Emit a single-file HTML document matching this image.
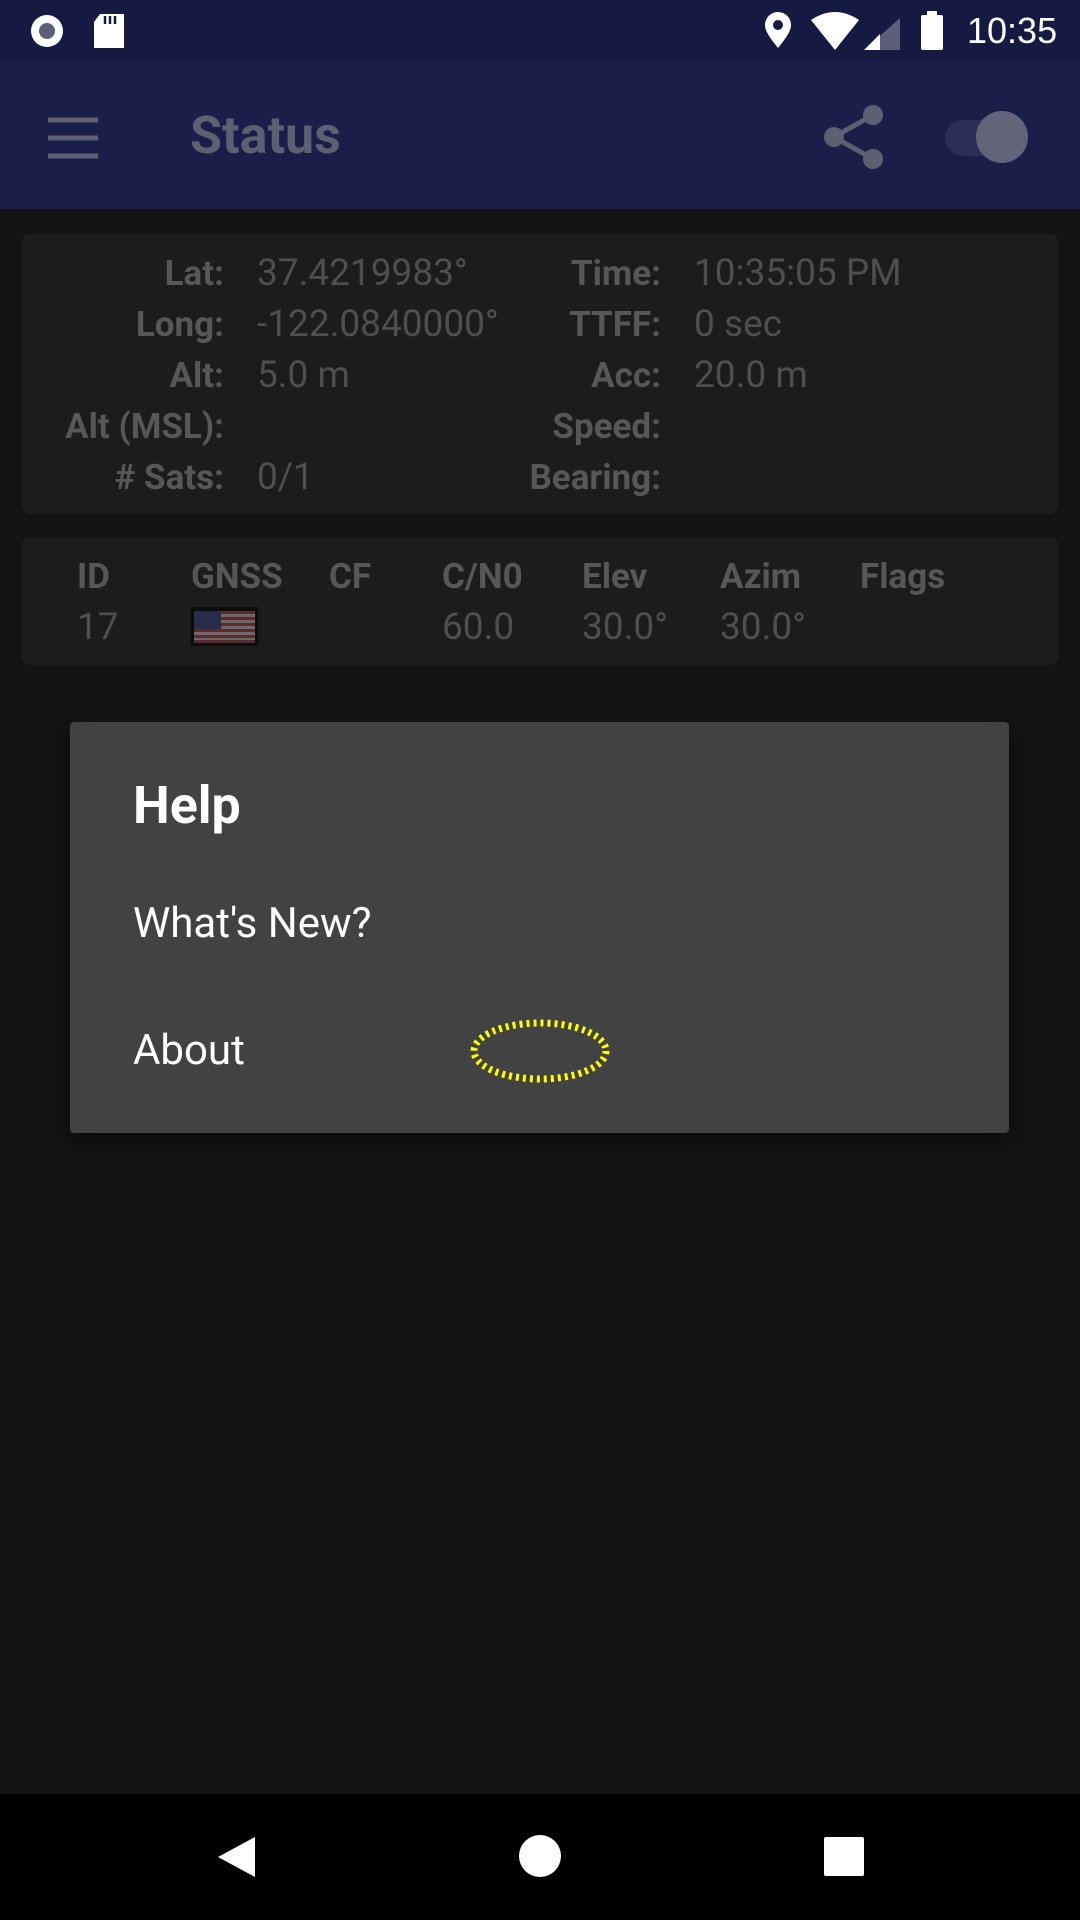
<!DOCTYPE html>
<html><head><meta charset="utf-8"><style>
*{margin:0;padding:0;box-sizing:border-box}
body{width:1080px;height:1920px;background:#141414;position:relative;overflow:hidden;font-family:"Roboto","Liberation Sans",sans-serif}
.abs{position:absolute}
.lbl{position:absolute;font-weight:bold;color:#575757;font-size:35px;text-align:right;line-height:40px}
.val{position:absolute;color:#4f4f4f;font-size:37px;line-height:40px}
.hd{position:absolute;font-weight:bold;color:#575757;font-size:35px;line-height:40px}
</style></head><body>
<div class="abs" style="left:0;top:0;width:1080px;height:62px;background:#141a42"></div>
<div class="abs" style="left:0;top:62px;width:1080px;height:147px;background:#1a1f4a"></div>
<svg class="abs" style="left:0;top:0" width="1080" height="62">
<circle cx="47" cy="31" r="16" fill="#fff"/><circle cx="47" cy="31" r="8" fill="#5c5f7a"/>
<path d="M100 14h24v34h-30v-26z" fill="#fff"/><path d="M105 16v8M110 16v8M115 16v8" stroke="#141a42" stroke-width="2.5"/>
<path d="M778 48c-8-10-13-17-13-23a13 13 0 0 1 26 0c0 6-5 13-13 23z" fill="#fff"/><circle cx="778" cy="25" r="5" fill="#141a42"/>
<path d="M811 20q24-16 48 0l-24 30z" fill="#fff"/>
<path d="M900 18v32h-36z" fill="#5c5f7a"/><path d="M880 34v16h-16z" fill="#fff"/>
<rect x="921" y="15" width="22" height="35" rx="2" fill="#fff"/><rect x="927" y="11" width="10" height="5" fill="#fff"/>
<text x="967" y="43" font-size="36" fill="#fff" font-family="Liberation Sans">10:35</text>
</svg>
<svg class="abs" style="left:0;top:62px" width="1080" height="147">
<path d="M48 58h50M48 76h50M48 94h50" stroke="#5d6070" stroke-width="5"/>
<g fill="#5d6070"><circle cx="873" cy="53" r="10"/><circle cx="873" cy="97" r="10"/><circle cx="834" cy="75" r="10"/></g>
<path d="M873 53L834 75L873 97" stroke="#5d6070" stroke-width="5" fill="none"/>
<rect x="945" y="58" width="80" height="36" rx="18" fill="#2b2f55"/>
<circle cx="1002" cy="75" r="26" fill="#62647a"/>
</svg>
<div class="abs" style="left:190px;top:106px;font-size:52px;font-weight:bold;color:#5d6070;line-height:60px">Status</div>
<div class="abs" style="left:22px;top:234px;width:1036px;height:280px;background:#1c1c1c;border-radius:8px"></div>
<div class="lbl" style="right:856px;top:254px">Lat:</div>
<div class="lbl" style="right:856px;top:305px">Long:</div>
<div class="lbl" style="right:856px;top:356px">Alt:</div>
<div class="lbl" style="right:856px;top:407px">Alt (MSL):</div>
<div class="lbl" style="right:856px;top:458px"># Sats:</div>
<div class="val" style="left:257px;top:254px">37.4219983°</div>
<div class="val" style="left:257px;top:305px">-122.0840000°</div>
<div class="val" style="left:257px;top:356px">5.0 m</div>
<div class="val" style="left:257px;top:458px">0/1</div>
<div class="lbl" style="right:419px;top:254px">Time:</div>
<div class="lbl" style="right:419px;top:305px">TTFF:</div>
<div class="lbl" style="right:419px;top:356px">Acc:</div>
<div class="lbl" style="right:419px;top:407px">Speed:</div>
<div class="lbl" style="right:419px;top:458px">Bearing:</div>
<div class="val" style="left:694px;top:254px">10:35:05 PM</div>
<div class="val" style="left:694px;top:305px">0 sec</div>
<div class="val" style="left:694px;top:356px">20.0 m</div>
<div class="abs" style="left:22px;top:537px;width:1036px;height:128px;background:#1c1c1c;border-radius:8px"></div>
<div class="hd" style="left:77px;top:557px">ID</div>
<div class="hd" style="left:191px;top:557px">GNSS</div>
<div class="hd" style="left:329px;top:557px">CF</div>
<div class="hd" style="left:442px;top:557px">C/N0</div>
<div class="hd" style="left:582px;top:557px">Elev</div>
<div class="hd" style="left:720px;top:557px">Azim</div>
<div class="hd" style="left:860px;top:557px">Flags</div>
<div class="val" style="left:77px;top:608px">17</div>
<svg class="abs" style="left:191px;top:607px" width="67" height="39">
<rect width="67" height="39" fill="#0c0c0c"/>
<g fill="#5a2a2e"><rect x="3" y="4" width="61" height="3"/><rect x="3" y="10" width="61" height="3"/><rect x="3" y="16" width="61" height="3"/><rect x="3" y="22" width="61" height="3"/><rect x="3" y="28" width="61" height="3"/><rect x="3" y="33" width="61" height="3"/></g>
<g fill="#6a6a6a"><rect x="3" y="7" width="61" height="3"/><rect x="3" y="13" width="61" height="3"/><rect x="3" y="19" width="61" height="3"/><rect x="3" y="25" width="61" height="3"/><rect x="3" y="31" width="61" height="2"/></g>
<rect x="3" y="4" width="27" height="18" fill="#2a2d4a"/>
</svg>
<div class="val" style="left:442px;top:608px">60.0</div>
<div class="val" style="left:582px;top:608px">30.0°</div>
<div class="val" style="left:720px;top:608px">30.0°</div>
<div class="abs" style="left:70px;top:722px;width:939px;height:411px;background:#424242;border-radius:4px;box-shadow:0 10px 30px rgba(0,0,0,.5)"></div>
<div class="abs" style="left:133px;top:776px;font-size:52px;font-weight:bold;color:#fff;line-height:60px">Help</div>
<div class="abs" style="left:133px;top:899px;font-size:42px;color:#fff;line-height:50px">What's New?</div>
<div class="abs" style="left:133px;top:1026px;font-size:42px;color:#fff;line-height:50px">About</div>
<svg class="abs" style="left:0;top:0" width="1080" height="1920">
<ellipse cx="540" cy="1051" rx="66" ry="28" fill="none" stroke="#ffff00" stroke-width="7" stroke-dasharray="3 4"/>
</svg>
<div class="abs" style="left:0;top:1794px;width:1080px;height:126px;background:#000"></div>
<svg class="abs" style="left:0;top:1794px" width="1080" height="126">
<path d="M255 43v40l-37-20z" fill="#fff"/>
<circle cx="540" cy="62" r="21" fill="#fff"/>
<rect x="824" y="43" width="40" height="39" rx="2" fill="#fff"/>
</svg>
</body></html>
